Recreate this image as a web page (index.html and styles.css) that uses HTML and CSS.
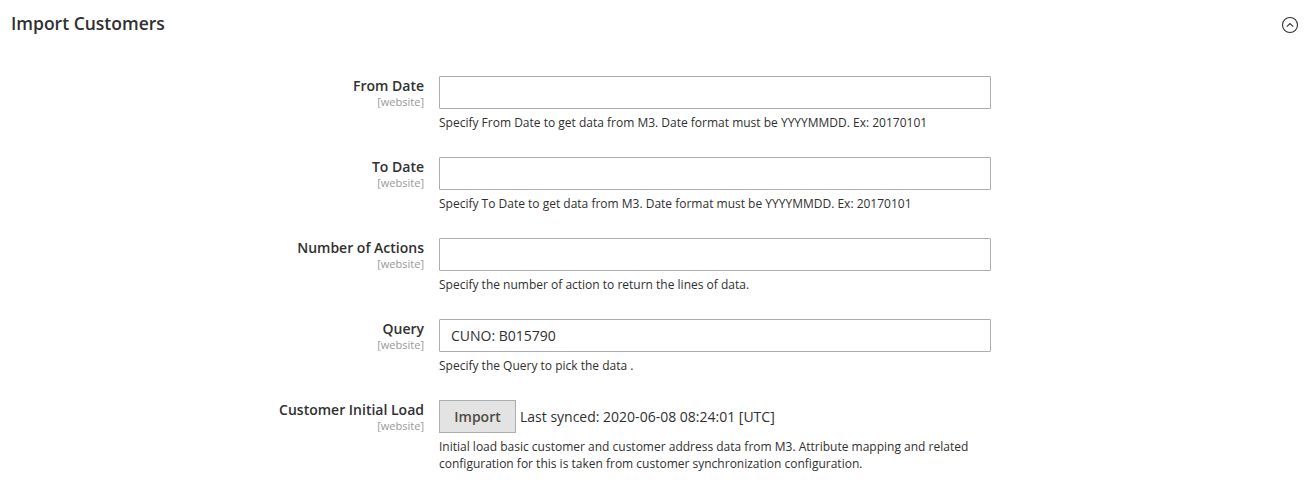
FILE: index.html
```html
<!DOCTYPE html>
<html lang="en">
<head>
<meta charset="utf-8">
<title>Import Customers</title>
<link rel="stylesheet" href="styles.css">
</head>
<body>
<section class="section">
  <header class="section-head">
    <h2 class="section-title">Import Customers</h2>
    <svg class="collapse-icon" width="18" height="18" viewBox="0 0 18 18" aria-hidden="true">
      <circle cx="9" cy="9" r="7.5" fill="none" stroke="#303030" stroke-width="1.1"/>
      <path d="M5.8 10.6 L9 7.6 L12.2 10.6" fill="none" stroke="#303030" stroke-width="1.1"/>
    </svg>
  </header>
  <div class="fields">
    <div class="row">
      <div class="label"><span class="label-text">From Date</span><span class="scope">[website]</span></div>
      <div class="control">
        <input class="input" type="text" value="">
        <p class="note">Specify From Date to get data from M3. Date format must be YYYYMMDD. Ex: 20170101</p>
      </div>
    </div>
    <div class="row">
      <div class="label"><span class="label-text">To Date</span><span class="scope">[website]</span></div>
      <div class="control">
        <input class="input" type="text" value="">
        <p class="note">Specify To Date to get data from M3. Date format must be YYYYMMDD. Ex: 20170101</p>
      </div>
    </div>
    <div class="row">
      <div class="label"><span class="label-text">Number of Actions</span><span class="scope">[website]</span></div>
      <div class="control">
        <input class="input" type="text" value="">
        <p class="note">Specify the number of action to return the lines of data.</p>
      </div>
    </div>
    <div class="row">
      <div class="label"><span class="label-text">Query</span><span class="scope">[website]</span></div>
      <div class="control">
        <input class="input" type="text" value="CUNO: B015790">
        <p class="note">Specify the Query to pick the data .</p>
      </div>
    </div>
    <div class="row">
      <div class="label"><span class="label-text">Customer Initial Load</span><span class="scope">[website]</span></div>
      <div class="control">
        <div class="action-line">
          <button class="button" type="button">Import</button>
          <span class="synced">Last synced: 2020-06-08 08:24:01 [UTC]</span>
        </div>
        <p class="note">Initial load basic customer and customer address data from M3. Attribute mapping and related configuration for this is taken from customer synchronization configuration.</p>
      </div>
    </div>
  </div>
</section>
</body>
</html>
```

FILE: styles.css
```css
html, body {
  margin: 0;
  padding: 0;
  background: #ffffff;
}

body {
  font-family: "Open Sans", "Liberation Sans", sans-serif;
  color: #303030;
}

.section {
  width: 1314px;
}

.section-head {
  display: flex;
  justify-content: space-between;
  align-items: center;
  padding: 12px 15px 0 11px;
}

.section-title {
  margin: 0;
  font-size: 17.5px;
  line-height: 23px;
  font-weight: 600;
  color: #303030;
}

.collapse-icon {
  display: block;
  margin-top: 2px;
}

.fields {
  padding-top: 41px;
}

.row {
  display: grid;
  grid-template-columns: 424px 552px;
  column-gap: 15px;
  margin-bottom: 26px;
}

.label {
  display: flex;
  flex-direction: column;
  align-items: flex-end;
  text-align: right;
}

.label-text {
  font-size: 14px;
  line-height: 19px;
  font-weight: 600;
  color: #303030;
}

.scope {
  font-size: 11px;
  line-height: 14px;
  color: #999999;
}

.control {
  display: flex;
  flex-direction: column;
}

.input {
  box-sizing: border-box;
  width: 552px;
  height: 33px;
  margin: 0;
  padding: 0 11px;
  border: 1px solid #adadad;
  border-radius: 1px;
  font-family: "Open Sans", "Liberation Sans", sans-serif;
  font-size: 14px;
  color: #303030;
  background: #ffffff;
  outline: none;
}

.note {
  margin: 5px 0 0;
  font-size: 12px;
  line-height: 17px;
  color: #303030;
}

.action-line {
  display: flex;
  align-items: center;
  gap: 4px;
  height: 33px;
}

.button {
  box-sizing: border-box;
  height: 33px;
  width: 77px;
  margin: 0;
  padding: 0;
  border: 1px solid #adadad;
  border-radius: 0;
  background: #e3e3e3;
  font-family: "Open Sans", "Liberation Sans", sans-serif;
  font-size: 14px;
  font-weight: 600;
  color: #514943;
}

.synced {
  font-size: 14px;
  line-height: 19px;
  color: #303030;
}
```
